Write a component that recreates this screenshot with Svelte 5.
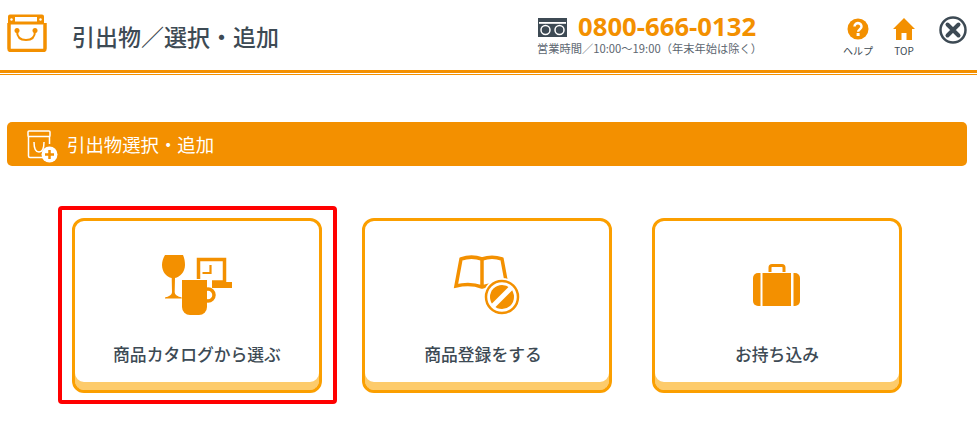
<script>
	const cards = [
		{ label: '商品カタログから選ぶ', icon: 'catalog', selected: true },
		{ label: '商品登録をする', icon: 'register', selected: false },
		{ label: 'お持ち込み', icon: 'carry', selected: false }
	];
</script>

<div class="page">
	<header class="top">
		<svg class="logo" viewBox="0 0 40 38" aria-hidden="true">
			<path d="M2 9v25.500a2 2 0 0 0 2 2h32a2 2 0 0 0 2-2V9" fill="none" stroke="#f39000" stroke-width="3.500" />
			<path d="M3 0.500h32a2 2 0 0 1 2 2v7a1 1 0 0 1-1 1H2a1 1 0 0 1-1-1v-7a2 2 0 0 1 2-2z" fill="#f39000" />
			<rect x="8" y="3" width="22" height="4.500" fill="#fff" />
			<circle cx="4.500" cy="5.500" r="1.200" fill="#fff" />
			<circle cx="33.500" cy="5.500" r="1.200" fill="#fff" />
			<path d="M10 17c0 6 3.500 9 9 9s9-3 9-9" fill="none" stroke="#f39000" stroke-width="2" />
			<circle cx="10" cy="16.500" r="2.500" fill="#f39000" />
			<circle cx="28" cy="16.500" r="2.500" fill="#f39000" />
		</svg>
		<h1>引出物／選択・追加</h1>

		<div class="contact">
			<div class="phone">
				<svg class="freedial" viewBox="0 0 29 19" aria-hidden="true">
					<rect width="29" height="19" fill="#3d4a54" />
					<rect x="1" y="4" width="27" height="1.800" fill="#fff" />
					<circle cx="7.500" cy="12" r="4.500" fill="none" stroke="#fff" stroke-width="1.500" />
					<circle cx="21.500" cy="12" r="4.500" fill="none" stroke="#fff" stroke-width="1.500" />
				</svg>
				<span>0800-666-0132</span>
			</div>
			<p>営業時間／10:00〜19:00（年末年始は除く）</p>
		</div>

		<nav class="tools">
			<div class="tool help">
				<svg viewBox="0 0 22 22" aria-hidden="true">
					<circle cx="11" cy="11" r="10.500" fill="#f39000" />
					<path d="M7.500 8.500a3.500 3.300 0 1 1 5.600 2.600c-1.300 1-2 1.400-2 2.600" fill="none" stroke="#fff" stroke-width="2.500" />
					<rect x="9.600" y="15" width="3" height="3" fill="#fff" />
				</svg>
				<span>ヘルプ</span>
			</div>
			<div class="tool home">
				<svg viewBox="0 0 22 22" aria-hidden="true">
					<path d="M11 0 22 11h-3v11h-5.500v-7h-5v7H3V11H0z" fill="#f39000" />
				</svg>
				<span>TOP</span>
			</div>
			<svg class="close" viewBox="0 0 28 28" aria-hidden="true">
				<circle cx="14" cy="14" r="12.500" fill="#fff" stroke="#3d4a54" stroke-width="2.500" />
				<path d="m8.500 8.500 11 11m0-11-11 11" stroke="#3d4a54" stroke-width="4" stroke-linecap="round" />
			</svg>
		</nav>
	</header>

	<section class="banner">
		<svg viewBox="0 0 32 34" aria-hidden="true">
			<path d="M1.500 7v20a1.500 1.500 0 0 0 1.500 1.500h13M22.500 15V7" fill="none" stroke="#fff" stroke-width="1.500" />
			<rect x="1" y="2" width="22" height="5.500" rx="1" fill="none" stroke="#fff" stroke-width="1.500" />
			<path d="M7 13c0 6 2 10 5 10s5-4 5-10" fill="none" stroke="#fff" stroke-width="1.500" />
			<circle cx="22.500" cy="25.500" r="8" fill="#fff" />
			<path d="M22.500 21v9m-4.500-4.500h9" stroke="#f39000" stroke-width="2.500" />
		</svg>
		<h2>引出物選択・追加</h2>
	</section>

	<div class="cards">
		{#each cards as card}
			<button class="card" type="button">
				{#if card.selected}<span class="selected"></span>{/if}
				<svg class="icon" viewBox="0 0 80 70" aria-hidden="true">
					{#if card.icon === 'catalog'}
						<path d="M8 5h18c1.500 3 2 7 2 10 0 7-5 12-10 13l-.3 14c0 3 3 4.500 7 5.500v1H8v-1c4-1 7-2.500 7-5.500l-.3-14C9.500 27 5 22 5 15c0-3 1-7 3-10z" fill="#f39000" />
						<path d="M41.500 29V9.500h26V32H55" fill="none" stroke="#f39000" stroke-width="3.500" />
						<path d="M55 32h20v6H55z" fill="#f39000" />
						<path d="M53.500 15v8h-8" fill="none" stroke="#f39000" stroke-width="2.200" />
						<path d="M25 30h25v27a8 8 0 0 1-8 8h-9a8 8 0 0 1-8-8z" fill="#f39000" />
						<circle cx="51" cy="45" r="6" fill="none" stroke="#f39000" stroke-width="3.500" />
					{:else if card.icon === 'register'}
						<path d="M14 9c7-2.500 14-2.500 21 0 7-2.500 13-2.500 20 0l5 27c-8-2-17-2-25 1-8-3-18-3-26-1z M35 9v28" fill="none" stroke="#f39000" stroke-width="3.500" />
						<circle cx="55" cy="47" r="19" fill="#fff" />
						<circle cx="55" cy="47" r="16" fill="none" stroke="#f39000" stroke-width="2.500" />
						<circle cx="55" cy="47" r="12" fill="#f39000" />
						<path d="m46 56 18-18" stroke="#fff" stroke-width="5" />
					{:else}
						<path d="M33 22v-4.500a2 2 0 0 1 2-2h10a2 2 0 0 1 2 2V22" fill="none" stroke="#f39000" stroke-width="3" />
						<path d="M25.500 23v33h28.500V23z" fill="#f39000" />
						<path d="M23.500 23H21a5 5 0 0 0-5 5v23a5 5 0 0 0 5 5h2.500z" fill="#f39000" />
						<path d="M56.500 23H58a5 5 0 0 1 5 5v23a5 5 0 0 1-5 5h-1.500z" fill="#f39000" />
					{/if}
				</svg>
				<span class="label {card.icon}">{card.label}</span>
			</button>
		{/each}
	</div>
</div>

<style>
	:global(body) {
		margin: 0;
		background: #fff;
		font-family: 'Noto Sans CJK JP', 'Noto Sans', sans-serif;
		color: #3d4a54;
	}

	.page {
		height: 428px;
		overflow: hidden;
	}

	.top {
		display: flex;
		align-items: flex-start;
		height: 70px;
		border-bottom: 3px solid #f39000;
		box-shadow: 0 1px 0 #fff, 0 2px 0 #f39000;
	}

	.logo {
		width: 40px;
		height: 38px;
		margin: 14px 0 0 7px;
		flex-shrink: 0;
	}

	h1 {
		margin: 20px 0 0 25px;
		font-size: 23px;
		line-height: 32px;
		font-weight: 500;
		color: #3d4a54;
		white-space: nowrap;
	}

	.contact {
		margin: 14px 0 0 auto;
		width: 260px;
	}

	.phone {
		display: flex;
		align-items: center;
		gap: 11px;
		height: 26px;
		margin-left: 1px;
		font-family: 'Open Sans', sans-serif;
		font-weight: 700;
		font-size: 25.700px;
		line-height: 26px;
		color: #f39000;
	}

	.phone span {
		display: block;
	}

	.freedial {
		width: 29px;
		height: 19px;
	}

	.contact p {
		margin: 1px 0 0;
		font-size: 11.250px;
		line-height: 15px;
		color: #5c6670;
		white-space: nowrap;
	}

	.tools {
		display: flex;
		align-items: flex-start;
		width: 132px;
		margin: 0 10px 0 38px;
		flex-shrink: 0;
	}

	.tool {
		display: flex;
		flex-direction: column;
		align-items: center;
		width: 46px;
		flex-shrink: 0;
		margin-top: 18px;
	}

	.tool svg {
		width: 22px;
		height: 22px;
	}

	.tool span {
		margin-top: 4px;
		font-size: 10px;
		line-height: 14px;
		white-space: nowrap;
	}

	.close {
		width: 28px;
		height: 28px;
		margin: 16px 0 0 12px;
		flex-shrink: 0;
	}

	.banner {
		display: flex;
		align-items: center;
		gap: 8px;
		height: 44px;
		margin: 49px 10px 0 7px;
		padding-left: 20px;
		background: #f39000;
		border-radius: 5px;
	}

	.banner svg {
		width: 32px;
		height: 34px;
		margin-top: 4px;
	}

	h2 {
		margin: 0;
		font-size: 18.400px;
		font-weight: 400;
		color: #fff;
		white-space: nowrap;
	}

	.cards {
		display: flex;
		gap: 40px;
		margin: 52px 0 0 72px;
	}

	.card {
		position: relative;
		display: flex;
		flex-direction: column;
		align-items: center;
		width: 250px;
		height: 175px;
		padding: 29px 0 0;
		box-sizing: border-box;
		background: #fff;
		border: 3px solid #fb9f00;
		border-radius: 12px;
		box-shadow: inset 0 -8px 0 #fdcb6b;
		font: inherit;
		color: inherit;
	}

	.selected {
		position: absolute;
		inset: -15px -18px -14px -17px;
		border: 4px solid #f00;
		border-radius: 4px;
	}

	.icon {
		width: 80px;
		height: 70px;
	}

	.label {
		margin-top: 22px;
		font-size: 16.800px;
		line-height: 24px;
		font-weight: 500;
		color: #3d4a54;
	}

	.label.register {
		margin-right: 8px;
	}
</style>
